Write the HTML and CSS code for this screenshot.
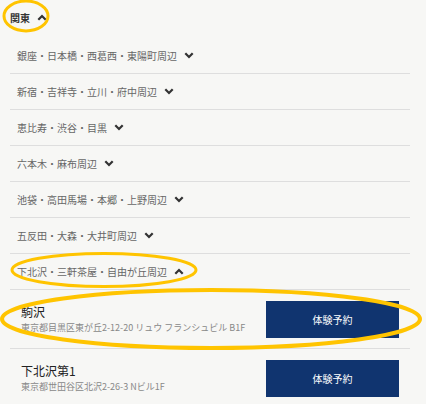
FILE: index.html
```html
<!DOCTYPE html>
<html lang="ja">
<head>
  <meta charset="UTF-8" />
  <meta name="viewport" content="width=device-width, initial-scale=1.0" />
  <title>店舗一覧</title>
  <link rel="stylesheet" href="styles.css">
</head>
<body>
  <div class="area">
    <div class="areaHead">
      <span>関東</span>
      <svg class="chev" width="10" height="7" viewBox="0 0 10 7"><polyline points="1.3,5.8 5,2 8.7,5.8" /></svg>
    </div>

    <div class="row">銀座・日本橋・西葛西・東陽町周辺
      <svg class="chev" width="10" height="7" viewBox="0 0 10 7"><polyline points="1.3,1.2 5,5 8.7,1.2" /></svg>
    </div>
    <div class="row">新宿・吉祥寺・立川・府中周辺
      <svg class="chev" width="10" height="7" viewBox="0 0 10 7"><polyline points="1.3,1.2 5,5 8.7,1.2" /></svg>
    </div>
    <div class="row">恵比寿・渋谷・目黒
      <svg class="chev" width="10" height="7" viewBox="0 0 10 7"><polyline points="1.3,1.2 5,5 8.7,1.2" /></svg>
    </div>
    <div class="row">六本木・麻布周辺
      <svg class="chev" width="10" height="7" viewBox="0 0 10 7"><polyline points="1.3,1.2 5,5 8.7,1.2" /></svg>
    </div>
    <div class="row">池袋・高田馬場・本郷・上野周辺
      <svg class="chev" width="10" height="7" viewBox="0 0 10 7"><polyline points="1.3,1.2 5,5 8.7,1.2" /></svg>
    </div>
    <div class="row">五反田・大森・大井町周辺
      <svg class="chev" width="10" height="7" viewBox="0 0 10 7"><polyline points="1.3,1.2 5,5 8.7,1.2" /></svg>
    </div>
    <div class="row">下北沢・三軒茶屋・自由が丘周辺
      <svg class="chev" width="10" height="7" viewBox="0 0 10 7"><polyline points="1.3,5.8 5,2 8.7,5.8" /></svg>
    </div>

    <div class="shop">
      <div class="shopInfo">
        <div class="shopName">駒沢</div>
        <div class="shopAddr">東京都目黒区東が丘2-12-20 リュウ フランシュビル B1F</div>
      </div>
      <button class="reserve">体験予約</button>
    </div>
    <div class="shop">
      <div class="shopInfo">
        <div class="shopName">下北沢第1</div>
        <div class="shopAddr">東京都世田谷区北沢2-26-3 Nビル1F</div>
      </div>
      <button class="reserve">体験予約</button>
    </div>
  </div>

  <!-- yellow marker circles drawn over the page -->
  <svg class="marks" width="426" height="404" viewBox="0 0 426 404">
    <ellipse cx="26" cy="16" rx="22" ry="15" stroke-width="3" />
    <ellipse cx="104" cy="270" rx="92" ry="16.5" stroke-width="3" />
    <ellipse cx="211" cy="319" rx="209" ry="29" stroke-width="4" />
  </svg>
</body>
</html>
```

FILE: styles.css
```css
body {
  margin: 0;
  background: #f7f7f5;
  font-family: "Noto Sans CJK JP", "Noto Sans", sans-serif;
  color: #666;
  overflow: hidden;
}
.area {
  margin: 0 16px 0 10px;
}
.areaHead {
  height: 34px;
  padding-bottom: 4px;
  display: flex;
  align-items: center;
  gap: 7px;
  font-size: 10px;
  font-weight: bold;
  color: #333;
}
.chev {
  display: block;
}
.chev polyline {
  fill: none;
  stroke: #333;
  stroke-width: 2.2;
}
.row {
  height: 35px;
  border-bottom: 1px solid #dedede;
  padding-left: 7px;
  display: flex;
  align-items: center;
  gap: 7px;
  font-size: 10px;
  color: #666;
}
.shop {
  height: 58px;
  border-bottom: 1px solid #dedede;
  padding: 0 11px 0 11px;
  display: flex;
  align-items: center;
  justify-content: space-between;
}
.shopName {
  font-size: 12px;
  line-height: 16px;
  color: #222;
}
.shopAddr {
  margin-top: 2px;
  font-size: 9px;
  line-height: 12px;
  color: #888;
}
.reserve {
  width: 133px;
  height: 37px;
  border: none;
  background: #10346f;
  color: #fff;
  font-family: "Noto Sans CJK JP", sans-serif;
  font-size: 10px;
}
.marks {
  position: absolute;
  top: 0;
  left: 0;
  pointer-events: none;
}
.marks ellipse {
  fill: none;
  stroke: #ffc400;
}
```
